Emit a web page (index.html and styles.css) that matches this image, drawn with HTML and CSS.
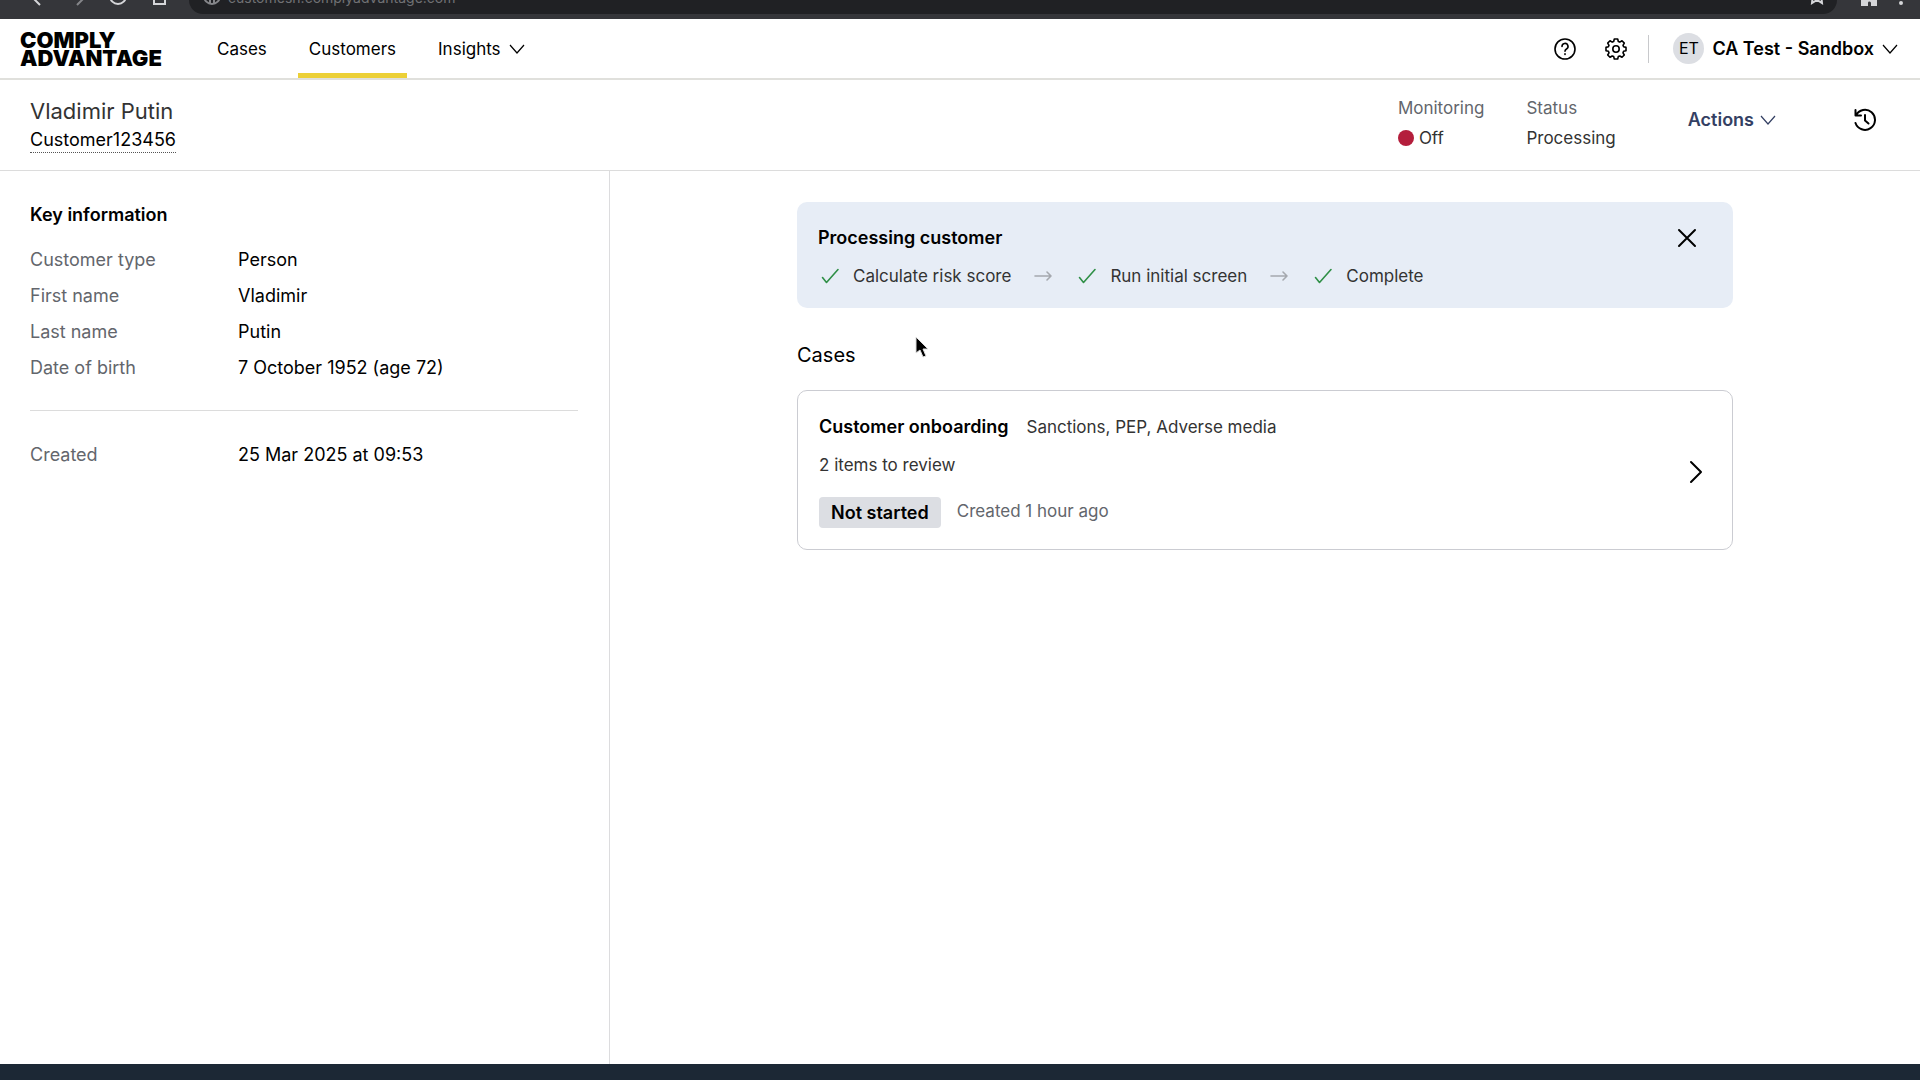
FILE: index.html
```
<!DOCTYPE html>
<html lang="en">
<head>
<meta charset="utf-8">
<title>Vladimir Putin – ComplyAdvantage</title>
<link rel="stylesheet" href="styles.css">
</head>
<body>
<div class="browser">
  <div class="browser-buttons">
    <svg class="browser-icon" viewBox="0 0 24 24"><path d="M16 5L7-4l9-9"/></svg>
    <svg class="browser-icon dim" viewBox="0 0 24 24"><path d="M13 5l9-9-9-9"/></svg>
    <svg class="browser-icon" viewBox="0 0 24 24"><circle cx="14" cy="-4" r="8"/></svg>
    <svg class="browser-icon" viewBox="0 0 24 24"><path d="M10-8V4h11V-8"/></svg>
  </div>
  <div class="address">
    <svg class="browser-icon globe" viewBox="0 0 24 24"><circle cx="12" cy="-4" r="8"/><path d="M6-4l4 3v4M18-2l-4 1v4"/></svg>
    <span class="url">customesh.complyadvantage.com</span>
    <svg class="browser-icon" viewBox="0 0 24 24"><path d="M8-6L7 3l5-3 5 3-1-9"/></svg>
  </div>
  <div class="browser-buttons">
    <svg class="browser-icon solid" viewBox="0 0 24 24"><path d="M5-8h14V5h-4V3a2 2 0 0 0-5 0v2H5z"/></svg>
    <svg class="browser-icon solid" viewBox="0 0 24 24"><circle cx="13" cy="3" r="1"/></svg>
  </div>
</div>

<header class="topbar">
  <a class="logo" href="#">COMPLY<br>ADVANTAGE</a>
  <nav class="nav">
    <a class="nav-item" href="#">Cases</a>
    <a class="nav-item active" href="#">Customers</a>
    <button class="nav-item" type="button">Insights <svg class="chevron" viewBox="0 0 16 16"><path d="M1 4l7 8 7-8"/></svg></button>
  </nav>
  <div class="tools">
    <button class="icon-button" type="button" aria-label="Help"><svg class="icon" viewBox="0 0 24 24"><circle cx="12" cy="12" r="10"/><path d="M9 9.500a3 3 0 1 1 4.500 2.500c-1 .6-1.500 1.100-1.500 2.200"/><path d="M12 16.800v.6"/></svg></button>
    <button class="icon-button" type="button" aria-label="Settings"><svg class="icon" viewBox="0 0 24 24"><circle cx="12" cy="12" r="3.200"/><path d="M10.300 2h3.400l.6 2.500 1.500.6 2.200-1.300 2.300 2.300-1.300 2.200.6 1.500 2.400.6v3.300l-2.400.6-.6 1.500 1.300 2.200-2.300 2.300-2.200-1.300-1.500.6-.6 2.400h-3.400l-.6-2.400-1.500-.6-2.200 1.300-2.300-2.300L5 15.800l-.6-1.500-2.400-.6v-3.300l2.400-.6.6-1.500-1.300-2.200L6 3.800l2.200 1.300 1.500-.6z"/></svg></button>
    <span class="separator"></span>
    <button class="account" type="button"><span class="avatar">ET</span>CA Test - Sandbox <svg class="chevron" viewBox="0 0 16 16"><path d="M1 4l7 8 7-8"/></svg></button>
  </div>
</header>

<section class="customer">
  <div class="identity">
    <h1 class="name">Vladimir Putin</h1>
    <a class="customer-id" href="#">Customer123456</a>
  </div>
  <dl class="states">
    <div class="state"><dt>Monitoring</dt><dd><span class="dot"></span>Off</dd></div>
    <div class="state"><dt>Status</dt><dd>Processing</dd></div>
  </dl>
  <div class="customer-tools">
    <button class="actions" type="button">Actions <svg class="chevron" viewBox="0 0 16 16"><path d="M1 4l7 8 7-8"/></svg></button>
    <button class="icon-button" type="button" aria-label="History"><svg class="icon history" viewBox="0 0 24 24"><path d="M2.500 2v5.500H8M3 7.500A10 10 0 1 1 2.500 15"/><path d="M12 7v5.500l3.500 3"/></svg></button>
  </div>
</section>

<div class="content">
  <aside class="sidebar">
    <h2 class="label-title">Key information</h2>
    <dl class="facts">
      <dt>Customer type</dt><dd>Person</dd>
      <dt>First name</dt><dd>Vladimir</dd>
      <dt>Last name</dt><dd>Putin</dd>
      <dt>Date of birth</dt><dd>7 October 1952 (age 72)</dd>
    </dl>
    <dl class="facts created">
      <dt>Created</dt><dd>25 Mar 2025 at 09:53</dd>
    </dl>
  </aside>
  <main class="main">
    <div class="column">
      <section class="banner">
        <div class="banner-text">
          <h2 class="label-title">Processing customer</h2>
          <div class="steps">
            <span class="step"><svg class="icon check" viewBox="0 0 24 24"><path d="M4.500 13.500l4 5L20 5.500"/></svg>Calculate risk score</span>
            <svg class="icon arrow" viewBox="0 0 24 24"><path d="M4 12h16M16 8l4 4-4 4"/></svg>
            <span class="step"><svg class="icon check" viewBox="0 0 24 24"><path d="M4.500 13.500l4 5L20 5.500"/></svg>Run initial screen</span>
            <svg class="icon arrow" viewBox="0 0 24 24"><path d="M4 12h16M16 8l4 4-4 4"/></svg>
            <span class="step"><svg class="icon check" viewBox="0 0 24 24"><path d="M4.500 13.500l4 5L20 5.500"/></svg>Complete</span>
          </div>
        </div>
        <button class="icon-button" type="button" aria-label="Close"><svg class="icon close" viewBox="0 0 24 24"><path d="M4 4l16 16M20 4L4 20"/></svg></button>
      </section>
      <h2 class="cases-title">Cases</h2>
      <a class="case" href="#">
        <div class="case-body">
          <div class="case-line"><strong>Customer onboarding</strong><span>Sanctions, PEP, Adverse media</span></div>
          <div class="case-line">2 items to review</div>
          <div class="case-foot"><span class="badge">Not started</span><span class="muted">Created 1 hour ago</span></div>
        </div>
        <svg class="icon open" viewBox="0 0 24 24"><path d="M7 2l10 10L7 22"/></svg>
      </a>
    </div>
  </main>
</div>
<footer class="footer"></footer>
<svg class="cursor" viewBox="0 0 16 24"><path d="M2 2v16l4-3 3 7 3-1-3-7h5z"/></svg>
</body>
</html>
```
FILE: styles.css
```
* { box-sizing: border-box; }
body {
  margin: 0;
  min-height: 100vh;
  display: flex;
  flex-direction: column;
  font: 18px/24px Inter, "Liberation Sans", sans-serif;
  color: #000;
  background: #fff;
}
h1, h2, dl, dd { margin: 0; }
a { color: inherit; text-decoration: none; }
button { font: inherit; color: inherit; border: 0; padding: 0; background: none; }
svg { display: block; flex: none; fill: none; stroke: currentColor; }

.browser {
  height: 19px;
  overflow: hidden;
  display: flex;
  align-items: flex-start;
  background: #35363a;
  color: #d5d6d9;
}
.browser-buttons { display: flex; gap: 16px; padding-left: 24px; }
.browser-buttons:last-child { gap: 7px; padding: 0 8px 0 20px; }
.browser-icon { width: 24px; height: 24px; stroke-width: 2; }
.dim, .globe { color: #85868a; }
.solid { fill: currentColor; }
.address {
  flex: 1;
  height: 14px;
  margin-left: 21px;
  padding: 0 8px 0 11px;
  display: flex;
  gap: 4px;
  background: #202124;
  border-radius: 0 0 16px 16px;
}
.url { flex: 1; margin-top: -3px; color: #707174; font-size: 14px; line-height: 1px; }

.topbar {
  height: 61px;
  display: flex;
  align-items: center;
  padding: 0 22px 0 20px;
  border-bottom: 2px solid #e0e0dc;
}
.logo { width: 147px; font-size: 22px; line-height: 18px; font-weight: 900; }
.nav { display: flex; align-self: stretch; gap: 20px; margin-left: 39px; font-size: 17px; }
.nav-item {
  display: flex;
  align-items: center;
  gap: 8px;
  padding: 5px 11px 0;
  border-bottom: 5px solid transparent;
}
.active { border-color: #ecd037; }
.chevron { width: 16px; height: 16px; stroke-width: 1.200; }
.tools { display: flex; align-items: center; margin-left: auto; }
.icon-button { display: flex; }
.icon { width: 24px; height: 24px; stroke-width: 1.600; stroke-linecap: round; stroke-linejoin: round; }
.tools .icon-button { margin-right: 27px; }
.tools .icon-button + .icon-button { margin-right: 20px; }
.separator { width: 1px; height: 28px; background: #c8c9cc; }
.account { display: flex; align-items: center; gap: 8px; margin-left: 24px; font-weight: 600; }
.avatar {
  width: 31px;
  height: 31px;
  border-radius: 50%;
  background: #dcdee3;
  font-size: 16px;
  line-height: 31px;
  font-weight: 400;
}

.customer {
  height: 91px;
  display: flex;
  padding: 17px 43px 0 30px;
  border-bottom: 1px solid #dcdcdc;
}
.name { font-size: 22px; line-height: 28px; font-weight: 400; color: #333; }
.customer-id { display: inline-block; line-height: 25px; padding-top: 2px; border-bottom: 1px dotted #555; }
.states { display: flex; align-items: flex-start; gap: 42px; margin-left: auto; font-size: 17px; line-height: 22px; color: #333; }
.state { display: grid; gap: 8px; }
.state dd { display: flex; align-items: center; gap: 5px; }
.states dt, .facts dt, .muted { color: #63666c; }
.dot { width: 16px; height: 16px; border-radius: 50%; background: #b41e3c; }
.customer-tools { display: flex; align-items: flex-start; gap: 77px; margin-left: 72px; padding-top: 11px; }
.actions { display: flex; align-items: center; gap: 6px; font-weight: 600; color: #344063; }
.history { stroke-width: 2; }

.content { flex: 1; display: flex; }
.sidebar { width: 610px; padding: 32px 31px 32px 30px; border-right: 1px solid #dcdcde; }
.label-title { font-size: 18px; line-height: 24px; font-weight: 600; }
.facts { display: grid; grid-template-columns: 208px 1fr; row-gap: 12px; margin-top: 21px; }
.created { margin-top: 30px; padding-top: 32px; border-top: 1px solid #dcdcdc; }
.main { flex: 1; padding: 31px 32px; }
.column { max-width: 936px; margin: 0 auto; }
.banner {
  display: flex;
  justify-content: space-between;
  align-items: flex-start;
  padding: 24px 34px 20px 21px;
  border-radius: 10px;
  background: #e7edf6;
}
.steps { display: flex; align-items: center; gap: 20px; margin-top: 14px; font-size: 17px; color: #333; }
.step { display: flex; gap: 11px; }
.check { color: #2f8f46; }
.arrow { color: #a5a8ae; }
.cases-title { margin: 35px 0 23px; font-size: 20px; line-height: 24px; font-weight: 400; }
.case {
  display: flex;
  align-items: center;
  justify-content: space-between;
  padding: 24px 24px 21px 21px;
  border: 1px solid #cbccd2;
  border-radius: 10px;
  font-size: 17px;
  color: #333;
}
.case-body { display: grid; gap: 14px; }
.case-line { display: flex; gap: 18px; }
.case-line strong { font-size: 18px; font-weight: 600; color: #000; }
.case-foot { display: flex; gap: 16px; margin-top: 6px; line-height: 28px; }
.badge { padding: 3px 12px; border-radius: 4px; background: #dcdee3; font-size: 18px; font-weight: 600; line-height: 25px; color: #000; }
.open, .close { color: #000; stroke-width: 2; }
.footer { height: 16px; background: #1c2835; }
.cursor {
  position: absolute;
  left: 914px;
  top: 335px;
  width: 16px;
  height: 24px;
  fill: #000;
  stroke: #ddd;
}
```
